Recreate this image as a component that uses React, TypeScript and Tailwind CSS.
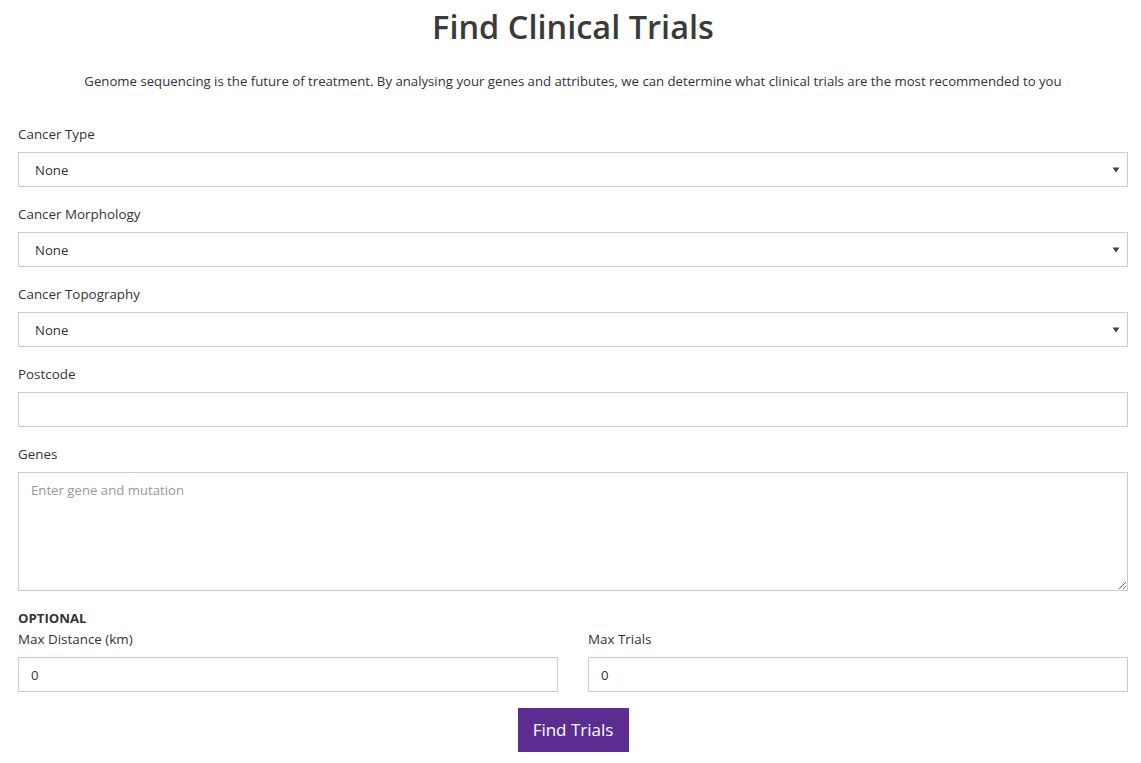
import React from 'react';

const font = { fontFamily: '"Open Sans", "Noto Sans", Arial, sans-serif' };

function Caret() {
  return (
    <svg width="8" height="6" viewBox="0 0 8 6" className="absolute right-[7px] top-1/2 -translate-y-1/2">
      <path d="M0.5 0.5h7L4 5.5z" fill="#444" />
    </svg>
  );
}

function SelectField({ label }: { label: string }) {
  return (
    <div className="flex flex-col">
      <label className="text-[13.4px] leading-5 text-[#333] mb-2">{label}</label>
      <div className="relative h-[35px] border border-[#ccc] bg-white flex items-center pl-4">
        <span className="text-[13.2px] text-[#333] mt-[2px]">None</span>
        <Caret />
      </div>
    </div>
  );
}

export default function App() {
  return (
    <div className="bg-white min-h-[763px] text-[#333]" style={font}>
      <div className="pl-[18px] pr-[13px]">
        <h1 className="text-center text-[32.5px] leading-[54px] font-semibold text-[#3a3a3a]">
          Find Clinical Trials
        </h1>
        <p className="text-center text-[13.2px] leading-5 mt-[17px] text-[#333]">
          Genome sequencing is the future of treatment. By analysing your genes and attributes, we can determine what clinical trials are the most recommended to you
        </p>

        <div className="mt-[33px] flex flex-col gap-[17px]">
          <SelectField label="Cancer Type" />
          <SelectField label="Cancer Morphology" />
          <SelectField label="Cancer Topography" />

          <div className="flex flex-col">
            <label className="text-[13.4px] leading-5 mb-2">Postcode</label>
            <input className="h-[35px] border border-[#ccc] px-3 text-[13px] outline-none" />
          </div>

          <div className="flex flex-col">
            <label className="text-[13.4px] leading-5 mb-2">Genes</label>
            <textarea
              placeholder="Enter gene and mutation"
              className="h-[119px] border border-[#ccc] px-3 py-[7px] text-[13.2px] leading-5 placeholder:text-[#999] outline-none"
            />
          </div>
        </div>

        <div className="mt-[17px]">
          <div className="text-[13.2px] leading-5 font-bold text-[#333]">OPTIONAL</div>
          <div className="grid grid-cols-2 gap-[30px] mt-[1px]">
            <div className="flex flex-col">
              <label className="text-[13.4px] leading-5 mb-2">Max Distance (km)</label>
              <input defaultValue="0" className="h-[35px] border border-[#ccc] px-3 text-[13.2px] outline-none" />
            </div>
            <div className="flex flex-col">
              <label className="text-[13.4px] leading-5 mb-2">Max Trials</label>
              <input defaultValue="0" className="h-[35px] border border-[#ccc] px-3 text-[13.2px] outline-none" />
            </div>
          </div>
        </div>

        <div className="flex justify-center mt-4">
          <button className="w-[111px] h-[44px] bg-[#5b2d91] text-white text-[17px]">Find Trials</button>
        </div>
      </div>
    </div>
  );
}
